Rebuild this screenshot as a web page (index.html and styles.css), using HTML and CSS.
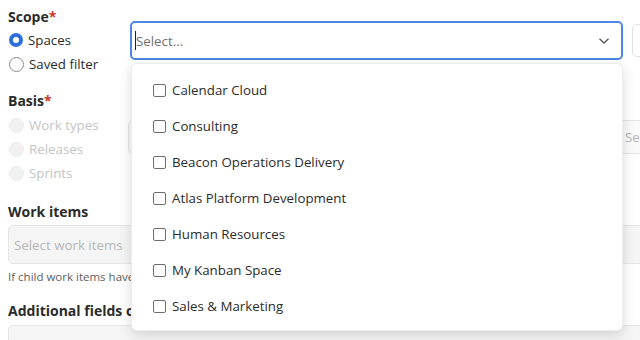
FILE: index.html
```html
<!DOCTYPE html>
<html lang="en">
<head>
    <meta charset="UTF-8">
    <title>Report settings</title>
    <link rel="stylesheet" href="styles.css">
</head>
<body>

    <div class="form">
        <div class="row">
            <div class="left">
                <div class="label">Scope<span class="req">*</span></div>
                <label class="radio"><span class="dot checked"></span>Spaces</label>
                <label class="radio"><span class="dot"></span>Saved filter</label>
            </div>
            <div class="select focused">
                <span class="caret"></span><span class="placeholder">Select...</span>
                <svg class="chevron" width="12" height="8" viewBox="0 0 12 8"><path d="M1.5 1.8 L6 6 L10.5 1.8" fill="none" stroke="#555" stroke-width="1.3"/></svg>
            </div>
            <div class="select side"></div>
        </div>

        <div class="row basis">
            <div class="left">
                <div class="label">Basis<span class="req">*</span></div>
                <label class="radio disabled"><span class="dot"></span>Work types</label>
                <label class="radio disabled"><span class="dot"></span>Releases</label>
                <label class="radio disabled"><span class="dot"></span>Sprints</label>
            </div>
            <div class="select muted"></div>
            <div class="select muted side2"><span class="placeholder light">Select...</span></div>
        </div>

        <div class="label wi">Work items</div>
        <div class="input disabled"><span class="placeholder light">Select work items</span></div>
        <div class="help">If child work items have different values, the parent value is used.</div>

        <div class="label af">Additional fields on report</div>
        <div class="input disabled"></div>
    </div>

    <div class="dropdown">
        <label class="option"><span class="box"></span>Calendar Cloud</label>
        <label class="option"><span class="box"></span>Consulting</label>
        <label class="option"><span class="box"></span>Beacon Operations Delivery</label>
        <label class="option"><span class="box"></span>Atlas Platform Development</label>
        <label class="option"><span class="box"></span>Human Resources</label>
        <label class="option"><span class="box"></span>My Kanban Space</label>
        <label class="option"><span class="box"></span>Sales &amp; Marketing</label>
    </div>

</body>
</html>
```

FILE: styles.css
```css
body {
    margin: 0;
    font-family: 'Open Sans', 'Noto Sans', sans-serif;
    font-size: 13.3px;
    color: #2b2b2b;
    background: #fff;
    overflow: hidden;
    width: 640px;
    height: 340px;
}
.form {
    width: 820px;
    padding: 7px 0 0 8px;
}
.row {
    display: flex;
    align-items: flex-start;
}
.left {
    width: 122px;
    flex: none;
}
.label {
    font-size: 14px;
    font-weight: bold;
    line-height: 20px;
    margin-bottom: 1px;
}
.req { color: #c9372c; }
.radio {
    display: flex;
    align-items: center;
    height: 24px;
    line-height: 24px;
}
.dot {
    width: 13px;
    height: 13px;
    border: 1px solid #8c8c8c;
    border-radius: 50%;
    margin: 0 5px 0 1px;
    box-sizing: content-box;
}
.dot.checked {
    border: 4.5px solid #2f6fd9;
    width: 6px;
    height: 6px;
    background: #fff;
}
.radio.disabled { color: #c4c4c4; }
.radio.disabled .dot {
    background: #f1f1f1;
    border-color: #ececec;
}
.select {
    position: relative;
    height: 39px;
    border: 1px solid #ccc;
    border-radius: 5px;
    box-sizing: border-box;
    display: flex;
    align-items: center;
}
.select.focused {
    width: 493px;
    margin-top: 14px;
    border: 2px solid #4c86e6;
    padding-left: 3px;
}
.caret {
    width: 1px;
    height: 19px;
    background: #222;
}
.placeholder { color: #707070; }
.placeholder.light { color: #b5b5b5; }
.chevron {
    position: absolute;
    right: 11px;
    top: 14px;
}
.select.side {
    width: 120px;
    height: 33px;
    margin: 17px 0 0 9px;
    border-color: #e2e2e2;
}
.basis { margin-top: 15px; }
.basis .left { width: 120px; }
.basis .label { margin-bottom: 2px; }
.select.muted {
    height: 34px;
    margin-top: 29px;
    width: 484px;
    border-color: #e4e4e4;
    background: #fafafa;
}
.select.side2 {
    width: 140px;
    margin-left: 4px;
    padding-left: 8px;
}
.wi { margin-top: 17px; margin-bottom: 3px; }
.input {
    height: 39px;
    width: 700px;
    border: 1px solid #e6e6e6;
    border-radius: 5px;
    background: #f5f5f5;
    box-sizing: border-box;
    display: flex;
    align-items: center;
    padding-left: 5px;
}
.help {
    font-size: 11.5px;
    line-height: 16px;
    color: #5e5e5e;
    margin-top: 5px;
    white-space: nowrap;
}
.af { margin-top: 16px; margin-bottom: 4px; }
.dropdown {
    position: absolute;
    top: 63px;
    left: 131px;
    width: 492px;
    height: 268px;
    box-sizing: border-box;
    padding: 8px 0 6px 21px;
    background: #fff;
    border-radius: 6px;
    border: 1px solid #ececec;
    box-shadow: 0 4px 14px rgba(0, 0, 0, 0.14);
}
.option {
    display: flex;
    align-items: center;
    height: 36px;
}
.box {
    width: 11px;
    height: 11px;
    border: 1px solid #6f6f6f;
    border-radius: 2px;
    margin-right: 6px;
}
```
